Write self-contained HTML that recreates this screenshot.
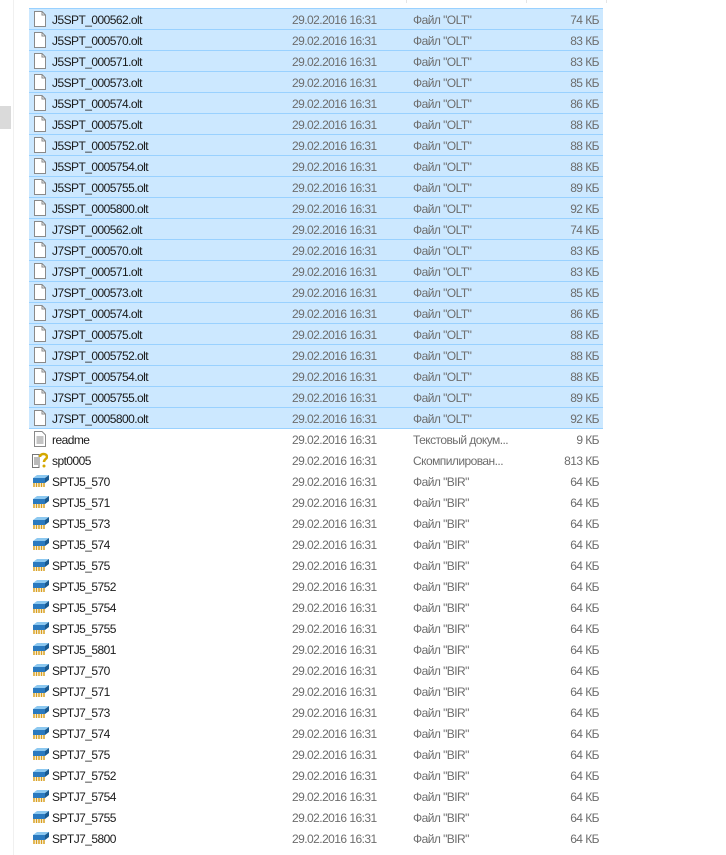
<!DOCTYPE html>
<html><head><meta charset="utf-8"><style>
body{margin:0;width:726px;height:855px;background:#fff;position:relative;overflow:hidden;font-family:"Liberation Sans",sans-serif;font-size:12px;letter-spacing:-0.55px;}
.vl{position:absolute;left:13px;top:0;width:1px;height:855px;background:#f0f0f0}
.gb{position:absolute;left:0;top:106px;width:11px;height:23px;background:#dadada}
.hs{position:absolute;top:0;width:1px;height:3px;background:#e5e5e5}
.r{position:absolute;left:29px;width:574px;height:20px;line-height:22px;}
.s{background:#cce8ff;border-top:1px solid #99d1ff;}
.n{position:absolute;left:23px;color:#1a1a1a}
.d{position:absolute;left:263px;color:#6d6d6d}
.t{position:absolute;left:384px;color:#6d6d6d}
.z{position:absolute;right:4px;color:#6d6d6d}
.i{position:absolute;left:5px;top:2px}
</style></head><body>
<div class="vl"></div><div class="gb"></div>
<div class="hs" style="left:406px"></div><div class="hs" style="left:526px"></div><div class="hs" style="left:606px"></div>
<svg width="0" height="0" style="position:absolute"><defs>
<symbol id="doc" viewBox="0 0 12 16"><path d="M0.5 0.5H8L11.5 4V15.5H0.5Z" fill="#fff" stroke="#8a8a8a"/><path d="M8 0.5V4H11.5" fill="none" stroke="#8a8a8a"/></symbol>
<symbol id="txt" viewBox="0 0 12 16"><path d="M0.5 0.5H8L11.5 4V15.5H0.5Z" fill="#fff" stroke="#8a8a8a"/><path d="M2.5 6H9.5M2.5 8H9.5M2.5 10H9.5M2.5 12H9.5" stroke="#8a8a8a"/></symbol>
<symbol id="exe" viewBox="0 0 16 16"><path d="M0.5 2.5H7V15.5H0.5Z" fill="#fff" stroke="#777"/><path d="M2 6H6M2 8H6M2 10H6M2 12H6" stroke="#777"/><path d="M8 5C8 1 15 1 15 5C15 7 12 7 12 10" fill="none" stroke="#d4a800" stroke-width="2.5"/><circle cx="12" cy="14" r="1.5" fill="#d4a800"/></symbol>
<symbol id="chip" viewBox="0 0 18 16"><path d="M1 5L5 2H17L13 5Z" fill="#8cc8f0"/><path d="M1 5H13V10H1Z" fill="#2a7ac0"/><path d="M13 5L17 2V7L13 10Z" fill="#1a5a90"/><path d="M2 10V14M4.5 10V14M7 10V14M9.5 10V14M12 10V14" stroke="#d9a020" stroke-width="1.5"/></symbol>
</defs></svg>
<div class="r s" style="top:8px"><svg class="i" width="12" height="16"><use href="#doc"/></svg><span class="n">J5SPT_000562.olt</span><span class="d">29.02.2016 16:31</span><span class="t">Файл "OLT"</span><span class="z">74 КБ</span></div>
<div class="r s" style="top:29px"><svg class="i" width="12" height="16"><use href="#doc"/></svg><span class="n">J5SPT_000570.olt</span><span class="d">29.02.2016 16:31</span><span class="t">Файл "OLT"</span><span class="z">83 КБ</span></div>
<div class="r s" style="top:50px"><svg class="i" width="12" height="16"><use href="#doc"/></svg><span class="n">J5SPT_000571.olt</span><span class="d">29.02.2016 16:31</span><span class="t">Файл "OLT"</span><span class="z">83 КБ</span></div>
<div class="r s" style="top:71px"><svg class="i" width="12" height="16"><use href="#doc"/></svg><span class="n">J5SPT_000573.olt</span><span class="d">29.02.2016 16:31</span><span class="t">Файл "OLT"</span><span class="z">85 КБ</span></div>
<div class="r s" style="top:92px"><svg class="i" width="12" height="16"><use href="#doc"/></svg><span class="n">J5SPT_000574.olt</span><span class="d">29.02.2016 16:31</span><span class="t">Файл "OLT"</span><span class="z">86 КБ</span></div>
<div class="r s" style="top:113px"><svg class="i" width="12" height="16"><use href="#doc"/></svg><span class="n">J5SPT_000575.olt</span><span class="d">29.02.2016 16:31</span><span class="t">Файл "OLT"</span><span class="z">88 КБ</span></div>
<div class="r s" style="top:134px"><svg class="i" width="12" height="16"><use href="#doc"/></svg><span class="n">J5SPT_0005752.olt</span><span class="d">29.02.2016 16:31</span><span class="t">Файл "OLT"</span><span class="z">88 КБ</span></div>
<div class="r s" style="top:155px"><svg class="i" width="12" height="16"><use href="#doc"/></svg><span class="n">J5SPT_0005754.olt</span><span class="d">29.02.2016 16:31</span><span class="t">Файл "OLT"</span><span class="z">88 КБ</span></div>
<div class="r s" style="top:176px"><svg class="i" width="12" height="16"><use href="#doc"/></svg><span class="n">J5SPT_0005755.olt</span><span class="d">29.02.2016 16:31</span><span class="t">Файл "OLT"</span><span class="z">89 КБ</span></div>
<div class="r s" style="top:197px"><svg class="i" width="12" height="16"><use href="#doc"/></svg><span class="n">J5SPT_0005800.olt</span><span class="d">29.02.2016 16:31</span><span class="t">Файл "OLT"</span><span class="z">92 КБ</span></div>
<div class="r s" style="top:218px"><svg class="i" width="12" height="16"><use href="#doc"/></svg><span class="n">J7SPT_000562.olt</span><span class="d">29.02.2016 16:31</span><span class="t">Файл "OLT"</span><span class="z">74 КБ</span></div>
<div class="r s" style="top:239px"><svg class="i" width="12" height="16"><use href="#doc"/></svg><span class="n">J7SPT_000570.olt</span><span class="d">29.02.2016 16:31</span><span class="t">Файл "OLT"</span><span class="z">83 КБ</span></div>
<div class="r s" style="top:260px"><svg class="i" width="12" height="16"><use href="#doc"/></svg><span class="n">J7SPT_000571.olt</span><span class="d">29.02.2016 16:31</span><span class="t">Файл "OLT"</span><span class="z">83 КБ</span></div>
<div class="r s" style="top:281px"><svg class="i" width="12" height="16"><use href="#doc"/></svg><span class="n">J7SPT_000573.olt</span><span class="d">29.02.2016 16:31</span><span class="t">Файл "OLT"</span><span class="z">85 КБ</span></div>
<div class="r s" style="top:302px"><svg class="i" width="12" height="16"><use href="#doc"/></svg><span class="n">J7SPT_000574.olt</span><span class="d">29.02.2016 16:31</span><span class="t">Файл "OLT"</span><span class="z">86 КБ</span></div>
<div class="r s" style="top:323px"><svg class="i" width="12" height="16"><use href="#doc"/></svg><span class="n">J7SPT_000575.olt</span><span class="d">29.02.2016 16:31</span><span class="t">Файл "OLT"</span><span class="z">88 КБ</span></div>
<div class="r s" style="top:344px"><svg class="i" width="12" height="16"><use href="#doc"/></svg><span class="n">J7SPT_0005752.olt</span><span class="d">29.02.2016 16:31</span><span class="t">Файл "OLT"</span><span class="z">88 КБ</span></div>
<div class="r s" style="top:365px"><svg class="i" width="12" height="16"><use href="#doc"/></svg><span class="n">J7SPT_0005754.olt</span><span class="d">29.02.2016 16:31</span><span class="t">Файл "OLT"</span><span class="z">88 КБ</span></div>
<div class="r s" style="top:386px"><svg class="i" width="12" height="16"><use href="#doc"/></svg><span class="n">J7SPT_0005755.olt</span><span class="d">29.02.2016 16:31</span><span class="t">Файл "OLT"</span><span class="z">89 КБ</span></div>
<div class="r s" style="top:407px;height:20px;border-bottom:1px solid #99d1ff"><svg class="i" width="12" height="16"><use href="#doc"/></svg><span class="n">J7SPT_0005800.olt</span><span class="d">29.02.2016 16:31</span><span class="t">Файл "OLT"</span><span class="z">92 КБ</span></div>
<div class="r" style="top:429px"><svg class="i" width="12" height="16"><use href="#txt"/></svg><span class="n">readme</span><span class="d">29.02.2016 16:31</span><span class="t">Текстовый докум...</span><span class="z">9 КБ</span></div>
<div class="r" style="top:450px"><svg class="i" width="16" height="16" style="left:3px"><use href="#exe"/></svg><span class="n">spt0005</span><span class="d">29.02.2016 16:31</span><span class="t">Скомпилирован...</span><span class="z">813 КБ</span></div>
<div class="r" style="top:471px"><svg class="i" width="18" height="16" style="left:3px"><use href="#chip"/></svg><span class="n">SPTJ5_570</span><span class="d">29.02.2016 16:31</span><span class="t">Файл "BIR"</span><span class="z">64 КБ</span></div>
<div class="r" style="top:492px"><svg class="i" width="18" height="16" style="left:3px"><use href="#chip"/></svg><span class="n">SPTJ5_571</span><span class="d">29.02.2016 16:31</span><span class="t">Файл "BIR"</span><span class="z">64 КБ</span></div>
<div class="r" style="top:513px"><svg class="i" width="18" height="16" style="left:3px"><use href="#chip"/></svg><span class="n">SPTJ5_573</span><span class="d">29.02.2016 16:31</span><span class="t">Файл "BIR"</span><span class="z">64 КБ</span></div>
<div class="r" style="top:534px"><svg class="i" width="18" height="16" style="left:3px"><use href="#chip"/></svg><span class="n">SPTJ5_574</span><span class="d">29.02.2016 16:31</span><span class="t">Файл "BIR"</span><span class="z">64 КБ</span></div>
<div class="r" style="top:555px"><svg class="i" width="18" height="16" style="left:3px"><use href="#chip"/></svg><span class="n">SPTJ5_575</span><span class="d">29.02.2016 16:31</span><span class="t">Файл "BIR"</span><span class="z">64 КБ</span></div>
<div class="r" style="top:576px"><svg class="i" width="18" height="16" style="left:3px"><use href="#chip"/></svg><span class="n">SPTJ5_5752</span><span class="d">29.02.2016 16:31</span><span class="t">Файл "BIR"</span><span class="z">64 КБ</span></div>
<div class="r" style="top:597px"><svg class="i" width="18" height="16" style="left:3px"><use href="#chip"/></svg><span class="n">SPTJ5_5754</span><span class="d">29.02.2016 16:31</span><span class="t">Файл "BIR"</span><span class="z">64 КБ</span></div>
<div class="r" style="top:618px"><svg class="i" width="18" height="16" style="left:3px"><use href="#chip"/></svg><span class="n">SPTJ5_5755</span><span class="d">29.02.2016 16:31</span><span class="t">Файл "BIR"</span><span class="z">64 КБ</span></div>
<div class="r" style="top:639px"><svg class="i" width="18" height="16" style="left:3px"><use href="#chip"/></svg><span class="n">SPTJ5_5801</span><span class="d">29.02.2016 16:31</span><span class="t">Файл "BIR"</span><span class="z">64 КБ</span></div>
<div class="r" style="top:660px"><svg class="i" width="18" height="16" style="left:3px"><use href="#chip"/></svg><span class="n">SPTJ7_570</span><span class="d">29.02.2016 16:31</span><span class="t">Файл "BIR"</span><span class="z">64 КБ</span></div>
<div class="r" style="top:681px"><svg class="i" width="18" height="16" style="left:3px"><use href="#chip"/></svg><span class="n">SPTJ7_571</span><span class="d">29.02.2016 16:31</span><span class="t">Файл "BIR"</span><span class="z">64 КБ</span></div>
<div class="r" style="top:702px"><svg class="i" width="18" height="16" style="left:3px"><use href="#chip"/></svg><span class="n">SPTJ7_573</span><span class="d">29.02.2016 16:31</span><span class="t">Файл "BIR"</span><span class="z">64 КБ</span></div>
<div class="r" style="top:723px"><svg class="i" width="18" height="16" style="left:3px"><use href="#chip"/></svg><span class="n">SPTJ7_574</span><span class="d">29.02.2016 16:31</span><span class="t">Файл "BIR"</span><span class="z">64 КБ</span></div>
<div class="r" style="top:744px"><svg class="i" width="18" height="16" style="left:3px"><use href="#chip"/></svg><span class="n">SPTJ7_575</span><span class="d">29.02.2016 16:31</span><span class="t">Файл "BIR"</span><span class="z">64 КБ</span></div>
<div class="r" style="top:765px"><svg class="i" width="18" height="16" style="left:3px"><use href="#chip"/></svg><span class="n">SPTJ7_5752</span><span class="d">29.02.2016 16:31</span><span class="t">Файл "BIR"</span><span class="z">64 КБ</span></div>
<div class="r" style="top:786px"><svg class="i" width="18" height="16" style="left:3px"><use href="#chip"/></svg><span class="n">SPTJ7_5754</span><span class="d">29.02.2016 16:31</span><span class="t">Файл "BIR"</span><span class="z">64 КБ</span></div>
<div class="r" style="top:807px"><svg class="i" width="18" height="16" style="left:3px"><use href="#chip"/></svg><span class="n">SPTJ7_5755</span><span class="d">29.02.2016 16:31</span><span class="t">Файл "BIR"</span><span class="z">64 КБ</span></div>
<div class="r" style="top:828px"><svg class="i" width="18" height="16" style="left:3px"><use href="#chip"/></svg><span class="n">SPTJ7_5800</span><span class="d">29.02.2016 16:31</span><span class="t">Файл "BIR"</span><span class="z">64 КБ</span></div>
</body></html>
